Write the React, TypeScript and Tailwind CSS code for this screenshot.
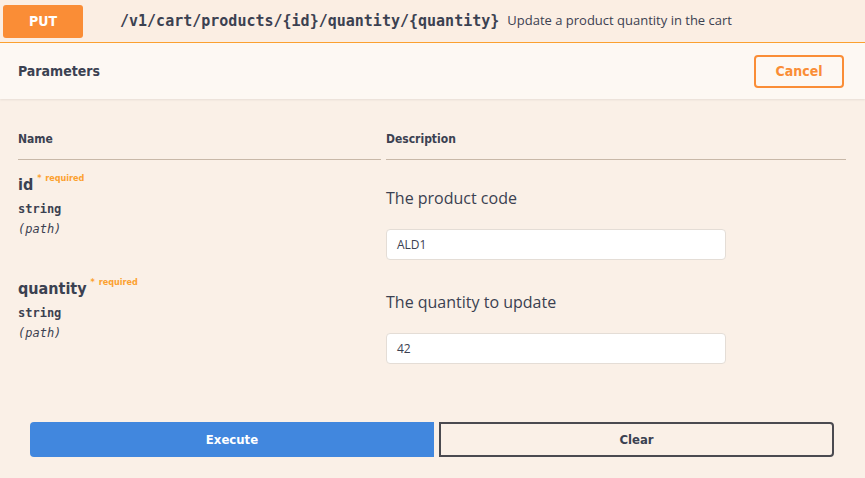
import React from "react";

type Param = { name: string; description: string; value: string };

const PARAMS: Param[] = [
  { name: "id", description: "The product code", value: "ALD1" },
  { name: "quantity", description: "The quantity to update", value: "42" },
];

function ParamRow({ p }: { p: Param }) {
  return (
    <div className="flex">
      <div className="w-[368px] shrink-0 pt-[15px]">
        <div className="flex items-start font-['DejaVu_Sans_Condensed','Liberation_Sans',sans-serif] text-[#3b4151]">
          <span className="text-[16px] font-bold leading-[20px]">{p.name}</span>
          <span className="ml-[4px] mt-[-3px] text-[9px] font-bold text-[#fca130]">
            * <span className="ml-[1px]">required</span>
          </span>
        </div>
        <div className="mt-[4px] font-['DejaVu_Sans_Mono','Liberation_Mono',monospace] text-[12px] font-semibold leading-[20px] text-[#3b4151]">
          string
        </div>
        <div className="font-['DejaVu_Sans_Mono','Liberation_Mono',monospace] text-[12px] italic leading-[20px] text-[#3b4151]">
          (path)
        </div>
      </div>
      <div className="flex-1 pt-[27px]">
        <p className="font-['Open_Sans','Noto_Sans',sans-serif] text-[16px] leading-[22px] text-[#3b4151]">
          {p.description}
        </p>
        <div className="mt-[20px] flex h-[31px] w-[340px] items-center rounded-[4px] border border-[#e4ddd6] bg-white px-[10px] font-['Open_Sans','Noto_Sans',sans-serif] text-[12px] text-[#3b4151]">
          {p.value}
        </div>
      </div>
    </div>
  );
}

export default function App() {
  return (
    <div className="h-[478px] w-[865px] overflow-hidden bg-[#faf0e7]">
      <div className="flex h-[43px] items-center border-b border-[#fca130] bg-[#fbeee3] pl-[3px]">
        <div className="flex h-[33px] w-[80px] items-center justify-center rounded-[3px] bg-[#fa8d36] font-['DejaVu_Sans_Condensed','Liberation_Sans',sans-serif] text-[14px] font-bold text-white">
          PUT
        </div>
        <span className="ml-[37px] font-['DejaVu_Sans_Mono','Liberation_Mono',monospace] text-[15px] font-bold text-[#3b4151]">
          /v1/cart/products/&#123;id&#125;/quantity/&#123;quantity&#125;
        </span>
        <span className="ml-[8px] font-['Open_Sans','Noto_Sans',sans-serif] text-[13px] text-[#3b4151]">
          Update a product quantity in the cart
        </span>
      </div>
      <div className="flex h-[56px] items-center justify-between bg-[#fdf8f3] pl-[18px] pr-[21px] shadow-[0_1px_2px_rgba(0,0,0,0.08)]">
        <span className="font-['DejaVu_Sans_Condensed','Liberation_Sans',sans-serif] text-[14px] font-bold text-[#3b4151]">
          Parameters
        </span>
        <button className="flex h-[33px] w-[90px] items-center justify-center rounded-[4px] border-2 border-[#fa8d36] bg-transparent font-['DejaVu_Sans_Condensed','Liberation_Sans',sans-serif] text-[14px] font-bold text-[#fa8d36]">
          Cancel
        </button>
      </div>
      <div className="px-[18px] pt-[31px]">
        <div className="flex font-['DejaVu_Sans_Condensed','Liberation_Sans',sans-serif] text-[12px] font-bold text-[#3b4151]">
          <div className="w-[363px] border-b border-[#c8b8a8] pb-[11px]">Name</div>
          <div className="ml-[5px] w-[460px] border-b border-[#c8b8a8] pb-[11px]">Description</div>
        </div>
        <div className="flex flex-col gap-[4px]">
          {PARAMS.map((p) => (
            <ParamRow key={p.name} p={p} />
          ))}
        </div>
      </div>
      <div className="mt-[58px] flex gap-[5px] pl-[30px]">
        <button className="h-[35px] w-[404px] rounded-l-[4px] bg-[#4187de] font-['DejaVu_Sans_Condensed','Liberation_Sans',sans-serif] text-[13px] font-bold text-white">
          Execute
        </button>
        <button className="h-[35px] w-[395px] rounded-r-[4px] border-2 border-[#4a4a50] bg-transparent font-['DejaVu_Sans_Condensed','Liberation_Sans',sans-serif] text-[13px] font-bold text-[#3b4151]">
          Clear
        </button>
      </div>
    </div>
  );
}
